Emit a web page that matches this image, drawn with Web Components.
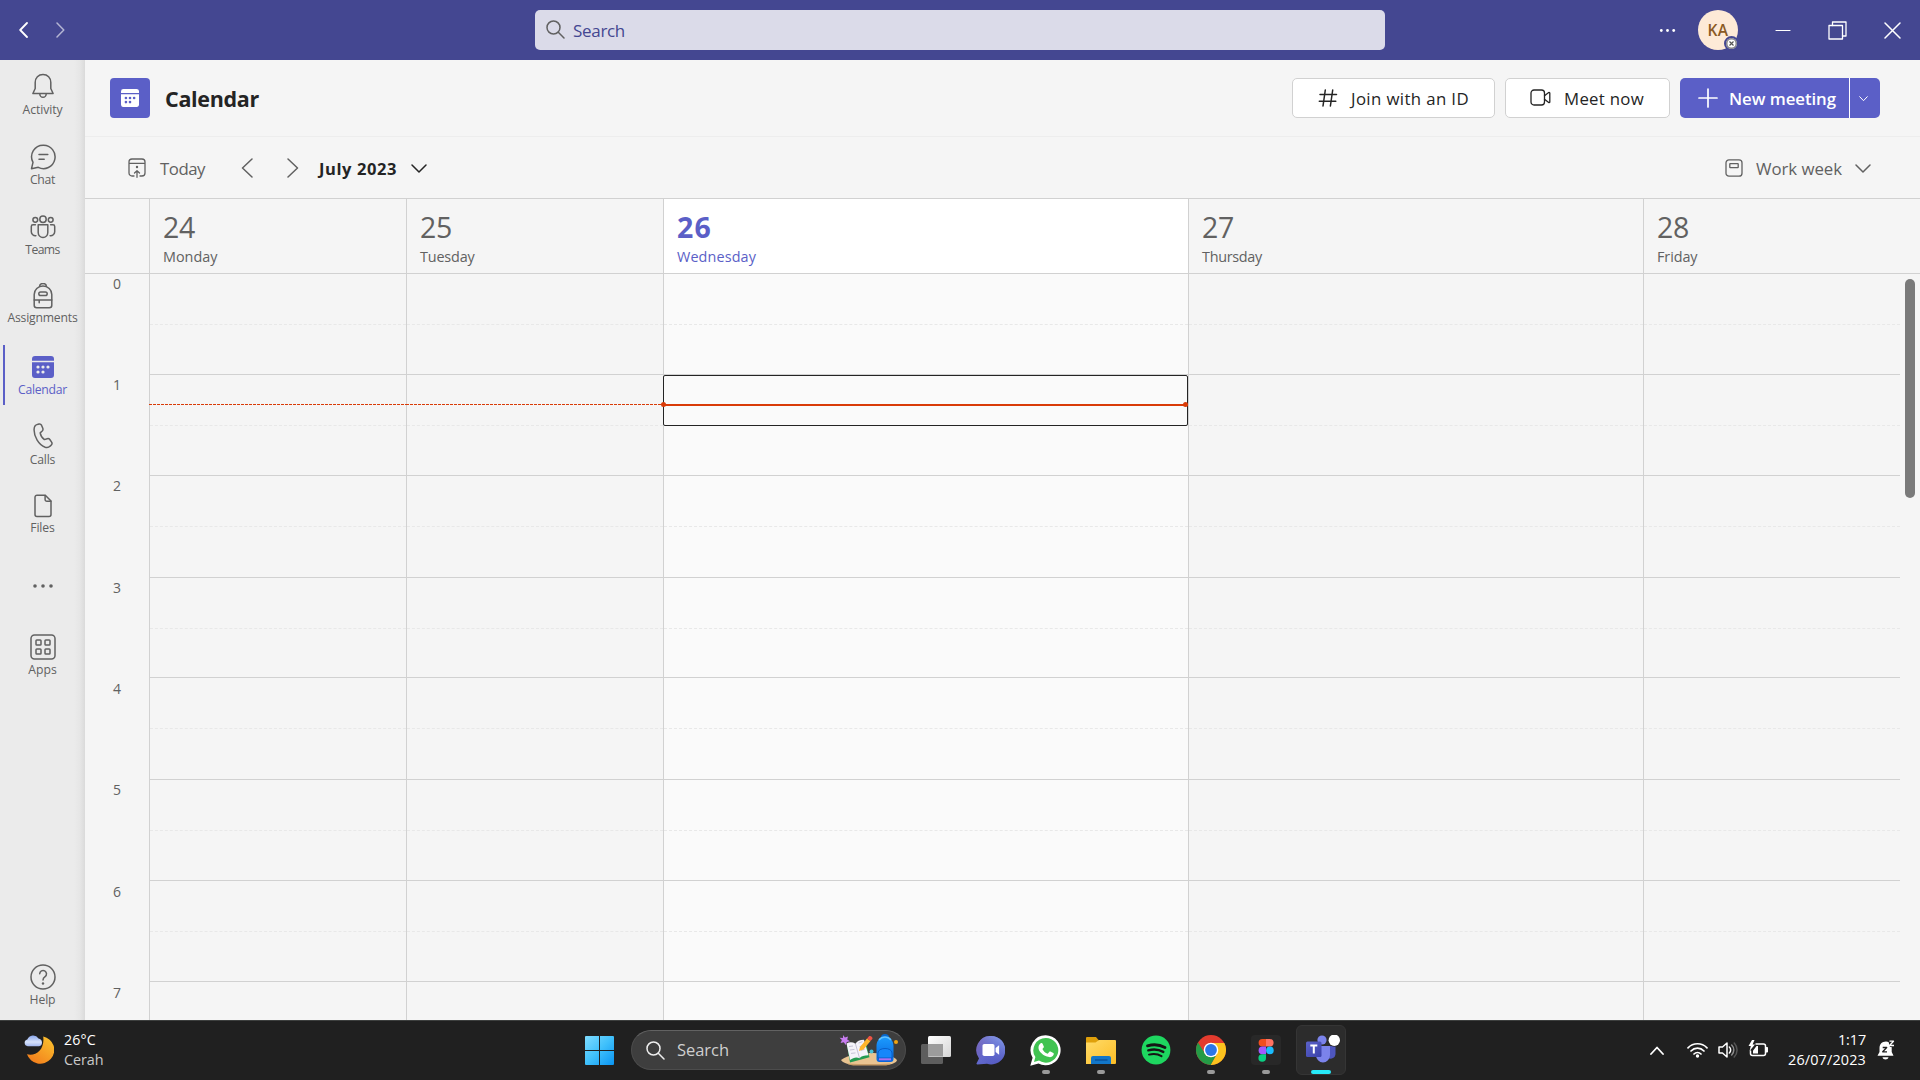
<!DOCTYPE html>
<html lang="en">
<head>
<meta charset="utf-8">
<title>Calendar</title>
<style>
html,body{margin:0;height:100%;overflow:hidden}
body{font-family:"Open Sans","Noto Sans",sans-serif;background:#f5f5f5;color:#616161}
</style>
</head>
<body>
<app-window></app-window>
<script>
const base = '<style>*{box-sizing:border-box}:host{display:flex;box-sizing:border-box}</style>';
const define = (name, html, setup) => {
  const tpl = document.createElement('template');
  tpl.innerHTML = base + html;
  customElements.define(name, class extends HTMLElement {
    connectedCallback() {
      if (this.shadowRoot) return;
      this.attachShadow({mode: 'open'}).appendChild(tpl.content.cloneNode(true));
      if (setup) setup(this, this.shadowRoot);
    }
  });
};

const L = 'fill="none" stroke="currentColor" stroke-linecap="round" stroke-linejoin="round"';
const icons = {
  back: [9,16,`<path ${L} stroke-width="1.8" d="M8 1 1.2 8 8 15"/>`],
  fwd: [9,16,`<path ${L} d="M1 1l6.8 7L1 15"/>`],
  left: [12,20,`<path ${L} d="M11 1 1.5 10 11 19"/>`],
  right: [12,20,`<path ${L} d="M1 1l9.500 9L1 19"/>`],
  down: [16,9,`<path ${L} d="M1 1l7 7 7-7"/>`],
  downs: [9,6,`<path ${L} stroke-width="1" d="M.7.7 4.500 4.700 8.300.7"/>`],
  lens: [19,19,`<g ${L}><circle cx="7.500" cy="7.500" r="6.500"/><path d="M12.300 12.300 18 18"/></g>`],
  dots: [17,5,'<g fill="currentColor"><circle cx="2.300" cy="2.500" r="1.400"/><circle cx="8.500" cy="2.500" r="1.400"/><circle cx="14.700" cy="2.500" r="1.400"/></g>'],
  min: [16,3,`<path ${L} stroke-width="1.200" d="M1 1.500h14"/>`],
  restore: [19,19,`<g ${L} stroke-width="1.300"><path d="M1 4.500h13.500V18H1z"/><path d="M4.500 4.500V1H18v14h-3.500"/></g>`],
  close: [17,17,`<path ${L} d="M1 1l15 15M16 1 1 16"/>`],
  bell: [24,26,`<g ${L}><path d="M12 1.500c-4.600 0-7.800 3.400-7.800 7.900v6.100L1.900 20.500h20.200l-2.300-5V9.400c0-4.500-3.200-7.900-7.800-7.900z"/><path d="M8.800 20.700a3.200 3.600 0 0 0 6.400 0"/></g>`],
  chat: [26,26,`<g ${L}><path d="M13.500 1.200A11.500 11.700 0 1 1 8.300 23.300L1.500 24.700 3 18.300A11.600 11.600 0 0 1 13.500 1.200z"/><path d="M9 10.600h8.800M9 15.200h5.200"/></g>`],
  teams: [26,24,`<g ${L}><circle cx="13" cy="4.300" r="3.200"/><circle cx="5.300" cy="4.800" r="2.400"/><circle cx="20.700" cy="4.800" r="2.400"/><path d="M8.200 9.800h9.600v7.700a4.800 4.900 0 0 1-9.600 0z"/><path d="M5.400 9.800H3a1.700 1.700 0 0 0-1.700 1.700v5.200a4.100 4.100 0 0 0 4.600 4M20.600 9.800H23a1.700 1.700 0 0 1 1.700 1.700v5.200a4.100 4.100 0 0 1-4.600 4"/></g>`],
  bag: [20,26,`<g ${L}><path d="M1.200 11.500a8.800 8.400 0 0 1 17.600 0v10.700a2.500 2.500 0 0 1-2.500 2.500H3.700a2.500 2.500 0 0 1-2.500-2.500z"/><path d="M6.600 3.400a3.400 2.900 0 0 1 6.800 0"/><rect x="5.800" y="9" width="8.400" height="3.600" rx="1.800"/><path d="M1.200 17h17.600M6.200 17v2.700"/></g>`],
  cal: [22,22,'<path fill="currentColor" d="M3 0h16a3 3 0 0 1 3 3v1.800H0V3a3 3 0 0 1 3-3zM0 6.300h22V19a3 3 0 0 1-3 3H3a3 3 0 0 1-3-3z"/><g fill="var(--hole,#ebebeb)"><circle cx="6" cy="11" r="1.600"/><circle cx="11" cy="11" r="1.600"/><circle cx="16" cy="11" r="1.600"/><circle cx="6" cy="16" r="1.600"/><circle cx="11" cy="16" r="1.600"/></g>'],
  call: [20,26,`<path ${L} d="M4.400 1.400 6 1c1-.2 2 .2 2.500 1.200l1.300 3.100c.4 1 .1 2-.6 2.700L7.200 9.900c.3 2.300 2 5.200 4.200 6.700l2.800-.9c1-.3 2 0 2.600.8l1.800 2.700c.6.9.5 2-.3 2.800l-1.100 1.100c-1.300 1.400-3.200 1.800-5 1.200C5.800 21.800.8 13.600 1.100 6.200 1.200 3.700 2.200 2 4.400 1.400z"/>`],
  file: [18,24,`<g ${L}><path d="M3 1.200h8.300L17 7v13.600a2 2 0 0 1-2 2H3a2 2 0 0 1-2-2V3.200a2 2 0 0 1 2-2z"/><path d="M11.100 1.500v4a1.800 1.800 0 0 0 1.800 1.800h4"/></g>`],
  more: [20,4,'<g fill="currentColor"><circle cx="2" cy="2" r="1.800"/><circle cx="10" cy="2" r="1.800"/><circle cx="18" cy="2" r="1.800"/></g>'],
  apps: [26,26,`<g ${L}><rect x="1" y="1" width="24" height="24" rx="3.500"/><rect x="6" y="6" width="5" height="5" rx=".8"/><rect x="15" y="6" width="5" height="5" rx=".8"/><rect x="6" y="15" width="5" height="5" rx=".8"/><rect x="15" y="15" width="5" height="5" rx=".8"/></g>`],
  help: [26,26,`<g ${L}><circle cx="13" cy="13" r="12"/><path d="M9.700 9.700a3.400 3.400 0 1 1 5.400 2.900c-1.400 1-2.100 1.700-2.100 3.400"/></g><circle cx="13" cy="19.500" r="1.200" fill="currentColor"/>`],
  today: [18,20,`<g ${L} stroke-width="1.300"><path d="M6 18H4a3 3 0 0 1-3-3V4a3 3 0 0 1 3-3h10a3 3 0 0 1 3 3v11a3 3 0 0 1-3 3h-2M1 5.400h16M9 19.300v-6M6.500 15 9 12.700l2.500 2.300"/></g><circle cx="9" cy="9" r="1.200" fill="currentColor"/>`],
  week: [18,18,`<g ${L} stroke-width="1.300"><rect x="1" y=".8" width="16" height="16.400" rx="3"/><rect x="4.800" y="4.600" width="8.400" height="4" rx=".4"/></g>`],
  hash: [20,18,`<path ${L} d="M7.300 1 5 17M14.700 1l-2.300 16M2 5.600h16.500M1.300 12.300h16.500"/>`],
  cam: [21,17,`<g ${L} stroke-width="1.300"><rect x="1" y="1" width="13.500" height="15" rx="3"/><path d="m14.500 6.700 4.200-3.200a.7.700 0 0 1 1.100.6v8.800a.7.700 0 0 1-1.100.6l-4.200-3.200"/></g>`],
  plus: [20,20,`<path ${L} stroke-width="1.700" d="M10 1v18M1 10h18"/>`],
  moon: [30,30,'<defs><linearGradient id="a" x1="1" x2=".3" y2="1"><stop offset="0" stop-color="#fbc62f"/><stop offset="1" stop-color="#f3801c"/></linearGradient><linearGradient id="b" x2="0" y2="1"><stop stop-color="#8ba7ec"/><stop offset=".6" stop-color="#d6e2fb"/><stop offset="1" stop-color="#a2b7f0"/></linearGradient></defs><path fill="url(#a)" d="M19.200 2.400A14 13.800 0 1 1 3 20.300c9 2.300 18-5 16.200-17.900z"/><path fill="url(#b)" d="M3.700 12.300A3.400 3.400 0 0 1 3.300 5.600 6.300 6.300 0 0 1 14.500 4.500a4 4 0 0 1 .6 7.800z"/>'],
  start: [29,29,'<defs><linearGradient id="a" x2="1" y2="1"><stop stop-color="#7fdcff"/><stop offset=".5" stop-color="#3fc0fb"/><stop offset="1" stop-color="#0a94f2"/></linearGradient></defs><path fill="url(#a)" d="M1 0h13v14H0V1a1 1 0 0 1 1-1zM15 0h13a1 1 0 0 1 1 1v13H15zM0 15h14v14H1a1 1 0 0 1-1-1zM15 15h14v13a1 1 0 0 1-1 1H15z"/>'],
  art: [60,32,'<defs><linearGradient id="a" x2="0" y2="1"><stop stop-color="#1c9cff"/><stop offset="1" stop-color="#0865dc"/></linearGradient></defs><path fill="#e9c491" d="M2 26C10 20 22 19 34 19s20 3 24 7c0 2-5 5-12 5H16C9 31 3 28 2 26z"/><path fill="#c99e68" d="M8 29.500c14 .8 30 .8 44 0-2 1.500-4 2-7 2H17c-4 0-7-.6-9-2z"/><path fill="#249b51" d="m8 12 3 16.500 19.500-5.200L27 9z"/><path fill="#f4f3fa" d="M7.500 9.500c3-1.700 6-1.500 9 .2 1.500-2.700 4-3.700 8.500-4l4.500 15.600c-4.500 0-7 .8-9 3-3-1.500-6-.8-9.500 1.700z"/><path stroke="#b9b5cd" stroke-width=".8" fill="none" d="m16.500 10 4 14M10 12.500l4-.5m-3 4 4.500-.6m-3.500 4 4.500-.5m3-9.900 4-1.300m-3 5 4-1.200m-2.600 5 3.700-1.200"/><path fill="#ffb52c" d="m21 13 7-8.500 3.500 2.500-7 8.500-4.500 1.500z"/><path fill="#ed5446" d="m28 4.500 1.800-2c1-1.300 4.700 1 3.500 2.600L31.500 7z"/><path fill="#0868ce" d="M42 3c0-4 8-4 8 0v3h-8z"/><path fill="url(#a)" d="M37.500 12c0-12.500 17-12.500 17 0v13a3 3 0 0 1-3 3h-11a3 3 0 0 1-3-3z"/><path d="M40 6c3-4 9-4 12 0" stroke="#63c3ff" stroke-width="1.400" fill="none"/><path fill="#1787fa" stroke="#0754bb" stroke-width=".8" d="M39 19c0-6 14-6 14 0v5H39z"/><path d="M40 25.300h12" stroke="#ac70f1" stroke-width="2"/><path fill="#c77cf0" d="M4.200 1l1.700 2.600L9 2.500 8.200 5.600 11 7.300 7.800 8 6.800 11 4.800 8.300 1.600 9 2.900 6 .6 3.800 3.900 4z"/><circle cx="32.500" cy="17.500" r="2" fill="#48c1d8"/><circle cx="57" cy="8" r="2" fill="#efa510"/>'],
  view: [30,28,'<defs><linearGradient id="a" x2="1" y2="1"><stop stop-color="#fff"/><stop offset="1" stop-color="#d5d5d5"/></linearGradient></defs><rect y="8" width="22" height="20" rx="1.500" fill="#5e5e5e"/><rect x="7" width="23" height="21" rx="1.500" fill="url(#a)"/><path d="M7 8h15v12.500H7z" fill="#9c9c9c"/>'],
  tchat: [29,29,'<defs><linearGradient id="a" x1="0" x2="1" y2="1"><stop stop-color="#8a62a9"/><stop offset=".5" stop-color="#6168cc"/><stop offset="1" stop-color="#5055bd"/></linearGradient><linearGradient id="b" x1=".4" y1="1" x2="1" y2="0"><stop stop-color="#5055c5" stop-opacity="0"/><stop offset="1" stop-color="#8ba5ed"/></linearGradient></defs><path fill="url(#a)" d="M15 0a14.200 14.200 0 1 1-4 27.800L1.300 28.500a.8.800 0 0 1-.7-1.200L3 22.500A14.200 14.200 0 0 1 15 0z"/><path fill="url(#b)" d="M15 0a14.200 14.200 0 1 1-4 27.800L1.300 28.500 3 22.500A14.200 14.200 0 0 1 15 0z"/><rect x="6.500" y="8" width="12" height="12" rx="1.800" fill="#fff"/><path fill="#fff" d="m19.600 12 3.500-2.800v9.600L19.600 16z"/>'],
  whats: [31,31,'<path fill="#fff" d="M15.600.2A15 15 0 1 1 8.500 28.400L.3 30.700l2.300-8A15 15 0 0 1 15.600.2z"/><path fill="#40c351" d="M15.700 2.900A12.400 12.400 0 1 1 9 25.600l-5 1.300 1.400-4.800A12.400 12.400 0 0 1 15.700 2.900z"/><path fill="#fff" d="M10.700 8.300c.7-.6 1.500-.5 1.900.4l1.200 2.800c.2.500 0 1-1.400 2.500 1 2.300 2.900 4 5.300 4.800l1.500-1.900c.4-.4.800-.5 1.300-.3l2.800 1.400c.6.300.5.900.3 1.700-.7 1.800-2.500 2.600-4.400 2.400-6-.8-11-6-10.700-9.600.1-2 1-3.300 2.200-4.200z"/>'],
  folder: [30,27,'<defs><linearGradient id="a" x2="1" y2="1"><stop stop-color="#ffdb69"/><stop offset="1" stop-color="#fcbd25"/></linearGradient></defs><path fill="#dfa00b" d="M1 0h9l3 3.500V10H0V1a1 1 0 0 1 1-1z"/><path fill="url(#a)" d="M0 5.500h9.500L13 3h16a1 1 0 0 1 1 1v22a1 1 0 0 1-1 1H0z"/><path fill="#1276c8" d="M5 27v-6a2 2 0 0 1 2-2h16a2 2 0 0 1 2 2v6z"/><path stroke="#084b91" stroke-width="1.200" d="M9 23h12.500"/>'],
  spot: [30,30,'<circle cx="15" cy="15" r="14.400" fill="#1ed760"/><g fill="none" stroke="#151515" stroke-linecap="round"><path stroke-width="2.800" d="M6.500 10.800c6-1.700 12.300-1.200 17.500 1.700"/><path stroke-width="2.400" d="M7.300 15.300c5.300-1.500 10.500-1 15 1.600"/><path stroke-width="2" d="M8 19.600c4.500-1.200 8.800-.8 12.500 1.500"/></g>'],
  chrome: [30,30,'<circle cx="15" cy="15" r="15" fill="#e33b2e"/><path fill="#fcc31e" d="M15 8h13.300A15 15 0 0 1 14.600 30l6.500-11.500z"/><path fill="#249b46" d="M2 7.500 9 18.500c2.500 4.200 8 4.500 11.500 1L14.600 30A15 15 0 0 1 2 7.500z"/><circle cx="15" cy="15" r="7.300" fill="#fff"/><circle cx="15" cy="15" r="5.900" fill="#2b76e8"/>'],
  figma: [30,30,'<rect width="30" height="30" rx="4" fill="#282828"/><path fill="#f24e1e" d="M15 4v7.600h-3.600a3.800 3.800 0 0 1 0-7.600z"/><path fill="#ff7262" d="M15 4h3.800a3.800 3.800 0 0 1 0 7.600H15z"/><path fill="#a259ff" d="M15 11.600v7.600h-3.600a3.800 3.800 0 0 1 0-7.600z"/><circle cx="18.900" cy="15.400" r="3.800" fill="#1abcfe"/><path fill="#0acf83" d="M15 19.200V23a3.800 3.800 0 1 1-3.800-3.800z"/>'],
  mst: [36,28,'<defs><linearGradient id="a" x2="1" y2="1"><stop stop-color="#5b62c9"/><stop offset="1" stop-color="#3940a9"/></linearGradient></defs><path fill="#4e56be" d="M22 11h7.500v8a5 5 0 0 1-7.500 4z"/><circle cx="16" cy="5" r="4.600" fill="#7b83eb"/><path fill="#7b83eb" d="M10 11h14v9a7 7.500 0 0 1-14 0z"/><rect y="6.500" width="15.500" height="15.500" rx="1.500" fill="url(#a)"/><path stroke="#fff" stroke-width="2" d="M4.300 10.500h7M7.800 10v8.500" fill="none"/><circle cx="28.300" cy="5.200" r="6.500" fill="#292929"/><circle cx="28.300" cy="5.200" r="5.700" fill="#fff"/>'],
  up: [14,9,`<path ${L} stroke-width="1.800" d="M1 8 7 1.500 13 8"/>`],
  wifi: [21,16,`<g ${L} stroke-width="1.700"><path d="M1 5.800a13.200 13.200 0 0 1 19 0M4 9a9 9 0 0 1 13 0M7 12a5 5 0 0 1 7 0"/></g><circle cx="10.500" cy="14" r="1.700" fill="currentColor"/>`],
  vol: [21,18,`<g ${L} stroke-width="1.500"><path d="M1 6h3.500L9 2v14l-4.500-4H1zM11.300 6a4 4 0 0 1 0 6"/><path stroke="#8b8b8b" d="M13.700 4a7 7 0 0 1 0 10"/><path stroke="#555" d="M16.200 2a10 10 0 0 1 0 14"/></g>`],
  bat: [21,18,`<g ${L} stroke-width="1.500"><path d="M8 4h7.500a2 2 0 0 1 2 2v7.500a2 2 0 0 1-2 2h-11a2 2 0 0 1-2-2V11"/></g><path fill="currentColor" d="M18 7h1.200a.8.800 0 0 1 .8.800v4a.8.800 0 0 1-.8.800H18zM4 0 .5 6h2.300L1.500 11 7 4.500H4.600L6.500 0zM5 13.500V10.800L8.500 6H10v7.500z"/>`],
  zbell: [18,20,'<path fill="currentColor" d="M9 1.500c-4 0-6.500 2.800-6.500 6.500v4L.5 15.700h16L14.700 12V8c0-3.700-1.700-6.500-5.700-6.500zM5.500 17.200h6c-.5 3-5.500 3-6 0z"/><path d="M11 0h7v7h-5z" fill="#202020"/><g fill="none" stroke-linejoin="round"><path stroke="#202020" stroke-width="1.300" d="M5.700 7.500h4l-4 4.300h4.300"/><path stroke="currentColor" stroke-width="1.300" d="M12.500 1.200h4l-4 4.300H17"/></g>']
};

define('ui-icon', '<style>:host{flex:none;line-height:0}</style>', (el, root) => {
  const [w, h, body] = icons[el.getAttribute('name')];
  const k = +(el.getAttribute('scale') || 1);
  root.innerHTML += `<svg width="${w*k}" height="${h*k}" viewBox="0 0 ${w} ${h}" stroke-width="1.5">${body}</svg>`;
});

/* Single-line label tracked to an exact advance width. */
define('ui-text', '<style>:host{display:block;flex:none;white-space:nowrap;line-height:20px}</style><slot></slot>', el => {
  const w = +el.getAttribute('w');
  el.style.fontSize = el.getAttribute('fs') + 'px';
  const r = document.createRange();
  r.selectNodeContents(el);
  const n = el.textContent.length;
  const ls = (w - r.getBoundingClientRect().width) / n;
  el.style.letterSpacing = ls.toFixed(3) + 'px';
  el.style.width = w + 'px';
});

define('title-bar', `
<style>
:host{height:60px;background:#444791;color:#fff;align-items:center}
.nav{display:flex;gap:28px;padding-left:19px;width:535px}
.nav ui-icon+ui-icon{opacity:.6}
.search{width:850px;height:40px;border-radius:5px;background:#dbdbe9;display:flex;align-items:center;padding-left:11px;gap:8px;color:#444791}
.search ui-icon{color:#616161;margin-top:-1px}
.search ui-text{padding-top:1px}
.dots{margin-left:274px}
.av{width:40px;height:40px;border-radius:50%;background:#fdead7;color:#8a5a24;margin-left:22px;display:flex;align-items:center;justify-content:center;position:relative;font-weight:600}
.av i{position:absolute;right:-1px;bottom:-1px;width:15px;height:15px;border-radius:50%;background:#fff;border:2px solid #444791;box-shadow:inset 0 0 0 1.5px #8a8a8a;display:flex;align-items:center;justify-content:center}
.av svg{display:block}
.min{margin-left:37px}.res{margin-left:37px}.cl{margin-left:37px}
</style>
<div class="nav"><ui-icon name="back"></ui-icon><ui-icon name="fwd"></ui-icon></div>
<div class="search"><ui-icon name="lens"></ui-icon><ui-text w="52" fs="17">Search</ui-text></div>
<ui-icon class="dots" name="dots"></ui-icon>
<div class="av"><ui-text w="21" fs="15.500">KA</ui-text><i><svg width="5" height="5"><path d="M.5.5l4 4m0-4-4 4" stroke="#555" stroke-width="1.200"/></svg></i></div>
<ui-icon class="min" name="min"></ui-icon><ui-icon class="res" name="restore"></ui-icon><ui-icon class="cl" name="close"></ui-icon>`);

define('rail-item', `
<style>
:host{flex-direction:column;align-items:center;flex:none;width:85px;position:relative}
.i{height:50px;padding-top:1px;display:flex;align-items:center;justify-content:center}
:host([active]){color:#5b5fc7}
:host([active])::before{content:"";position:absolute;left:3px;top:4px;width:2px;height:60px;background:#5b5fc7}
</style><div class="i"></div>`, (el, root) => {
  const a = k => el.getAttribute(k);
  el.style.height = a('h') + 'px';
  root.querySelector('.i').innerHTML = `<ui-icon name="${a('icon')}"></ui-icon>`;
  if (a('label')) {
    const t = document.createElement('ui-text');
    t.textContent = a('label');
    t.setAttribute('w', a('w')); t.setAttribute('fs', '12.2');
    t.style.marginTop = (+a('off') - 35) + 'px';
    root.appendChild(t);
  }
});

define('app-rail', `
<style>:host{width:85px;flex-direction:column;background:linear-gradient(90deg,#ebebeb 74px,#e6e6e6 80px,#dadada 85px)}</style>
<rail-item icon="bell" label="Activity" w="40" h="71" off="25"></rail-item>
<rail-item icon="chat" label="Chat" w="25" h="70" off="24"></rail-item>
<rail-item icon="teams" label="Teams" w="34.500" h="69" off="24"></rail-item>
<rail-item icon="bag" label="Assignments" w="70" h="71" off="23"></rail-item>
<rail-item active icon="cal" label="Calendar" w="49" h="69" off="24"></rail-item>
<rail-item icon="call" label="Calls" w="25.500" h="70" off="25"></rail-item>
<rail-item icon="file" label="Files" w="24.500" h="80" off="23"></rail-item>
<rail-item icon="more" h="61"></rail-item>
<rail-item icon="apps" label="Apps" w="28.500" h="330" off="24"></rail-item>
<rail-item icon="help" label="Help" w="26" h="69" off="24"></rail-item>`);

define('page-header', `
<style>
:host{height:77px;align-items:flex-start;padding:18px 40px 0 25px;border-bottom:1px solid #ededed}
.logo{width:40px;height:40px;border-radius:4px;background:#5b5fc7;color:#fff;--hole:#5b5fc7;display:flex;align-items:center;justify-content:center}
.t{margin:11px 0 0 15px;font-weight:700;color:#242424}
.b{height:40px;border:1px solid #d1d1d1;border-radius:5px;background:#fff;color:#242424;display:flex;align-items:center}
.b ui-text,.n ui-text{padding-top:2px}
.b ui-icon,.n>ui-icon{margin-top:-1px}
.n{height:40px;border-radius:5px;background:#5b5fc7;color:#fff;display:flex;align-items:center;font-weight:600;width:200px;margin-left:10px;padding-left:18px}
.d{margin-left:13px;width:31px;height:40px;border-left:1px solid #fff;display:flex;align-items:center;padding:2px 0 0 9px}
</style>
<div class="logo"><ui-icon name="cal" scale=".82"></ui-icon></div><ui-text class="t" w="94" fs="21.500">Calendar</ui-text>
<div class="b" style="width:203px;margin-left:auto;padding-left:25px;gap:13px"><ui-icon name="hash"></ui-icon><ui-text w="118" fs="16.800">Join with an ID</ui-text></div>
<div class="b" style="width:165px;margin-left:10px;padding-left:24px;gap:13px"><ui-icon name="cam"></ui-icon><ui-text w="80" fs="16.800">Meet now</ui-text></div>
<div class="n"><ui-icon name="plus"></ui-icon><ui-text style="margin-left:11px" w="107" fs="16.800">New meeting</ui-text><div class="d"><ui-icon name="downs"></ui-icon></div></div>`);

define('cal-toolbar', `
<style>:host{height:61px;align-items:center;padding:1px 49px 0 43px}.m{color:#242424;font-weight:700}ui-text{padding-top:2px}</style>
<ui-icon name="today"></ui-icon><ui-text style="margin-left:14px" w="45" fs="16.800">Today</ui-text>
<ui-icon style="margin-left:36px" name="left"></ui-icon><ui-icon style="margin-left:34px" name="right"></ui-icon>
<ui-text class="m" style="margin-left:20px" w="78" fs="16.500">July 2023</ui-text><ui-icon style="margin-left:14px;color:#242424" name="down"></ui-icon>
<ui-icon style="margin-left:auto" name="week"></ui-icon><ui-text style="margin-left:13px" w="86" fs="16.800">Work week</ui-text><ui-icon style="margin-left:13px" name="down"></ui-icon>`);

define('day-head', `
<style>
:host{flex-direction:column;flex:none;border-left:1px solid #d1d1d1;height:74px;padding:16px 0 0 13px}
:host([today]){background:#fff;color:#5b5fc7}
.n{line-height:24px}:host([today]) .n{font-weight:700}
.d{margin-top:8px}
</style><slot></slot>`, (el, root) => {
  const a = k => el.getAttribute(k);
  el.style.width = a('width') + 'px';
  root.innerHTML += `<ui-text class="n" w="${a('nw')}" fs="28.5">${a('n')}</ui-text><ui-text class="d" w="${a('dw')}" fs="14.4">${a('day')}</ui-text>`;
});

define('week-head', `
<style>:host{height:76px;border-top:1px solid #d1d1d1;border-bottom:1px solid #d1d1d1;padding-left:64px}</style>
<day-head width="257" n="24" nw="32" day="Monday" dw="54.500"></day-head>
<day-head width="257" n="25" nw="32" day="Tuesday" dw="54.500"></day-head>
<day-head width="525" n="26" nw="35" day="Wednesday" dw="79" today></day-head>
<day-head width="455" n="27" nw="32" day="Thursday" dw="60"></day-head>
<day-head width="277" n="28" nw="32" day="Friday" dw="40.500"></day-head>`);

define('hour-cell', `
<style>:host{display:block;height:var(--h);border-top:1px solid #d1d1d1;overflow:hidden}
div{height:var(--half);border-bottom:1px dashed #e8e8e8}</style><div></div>`);

define('day-column', `
<style>
:host{flex-direction:column;flex:none;border-left:1px solid #d1d1d1;position:relative}
:host([today]){background:#fafafa}
hour-cell:first-of-type{border-top-color:transparent}
.past{position:absolute;left:-1px;right:0;top:130px;height:1px;background:repeating-linear-gradient(90deg,#d93b08 0 3px,transparent 3px 4px)}
.slot{position:absolute;left:-1px;right:0;top:101px;height:51px;border:1px solid #242424;border-radius:2px}
.now{position:absolute;left:0;right:0;top:130px;height:2px;background:#d93b08}
.now::before,.now::after{content:"";position:absolute;top:-2px;width:5px;height:5px;border-radius:50%;background:#d93b08}
.now::before{left:-3px}.now::after{right:0}
</style>`, (el, root) => {
  el.style.width = el.getAttribute('width') + 'px';
  const hs = [100,101,102,101,102,101,101,39];
  root.innerHTML += hs.map((h,i) => `<hour-cell style="--h:${h}px;--half:${i ? 51 : 50}px"></hour-cell>`).join('')
    + (el.hasAttribute('today') ? '<div class="slot"></div><div class="now"></div>' : '')
    + (el.hasAttribute('past') ? '<div class="past"></div>' : '');
});

define('week-grid', `
<style>
:host{flex:1;min-height:0;overflow:hidden}
.h{width:64px;display:flex;flex-direction:column}
.h div{flex:none;display:flex;justify-content:center}
.s{flex:1;padding:5px 0 0 5px}
.s div{width:10px;height:219px;border-radius:5px;background:#7a7a7a}
</style>
<div class="h"></div>
<day-column width="257" past></day-column><day-column width="257" past></day-column><day-column width="525" today></day-column><day-column width="455"></day-column><day-column width="257"></day-column>
<div class="s"><div></div></div>`, (el, root) => {
  root.querySelector('.h').innerHTML = [101,101,102,101,101,102,101,38].map((h,i) => `<div style="height:${h}px"><ui-text w="8" fs="14">${i}</ui-text></div>`).join('');
});

define('task-tile', `
<style>
:host{width:50px;height:50px;flex:none;align-items:center;justify-content:center;position:relative;border-radius:6px;border:1px solid transparent}
:host([current]){background:#2c2c2c;border-color:#353535}
:host([open])::after,:host([current])::after{content:"";position:absolute;left:20px;bottom:0;width:8px;height:4px;border-radius:2px;background:#9a9a9a}
:host([current])::after{left:14px;width:20px;background:#27e9f8}
</style><slot></slot>`);

define('task-bar', `
<style>
:host{height:60px;background:#202020;border-top:1px solid #3d3f3e;color:#fff;align-items:center;padding-bottom:1px}
.w{display:flex;align-items:center;padding-left:24px;gap:10px;width:585px}
.w ui-icon{margin-top:-3px}
.w div{margin-top:-1px}
.dim{color:#c9c9c9}
.s{width:275px;height:40px;border-radius:20px;background:#3e3e3e;border:1px solid #4c4c4c;border-top-color:#626262;margin-left:17px;display:flex;align-items:center;padding:0 6px 0 14px;color:#cfcfcf}
.s .l{color:#eee}
.apps{display:flex;gap:5px;margin-left:5px}
.tray{display:flex;align-items:center;margin-left:auto}
.c{display:flex;flex-direction:column;align-items:flex-end;margin:-1px 11px 0 19px}
</style>
<div class="w"><ui-icon name="moon"></ui-icon><div><ui-text w="32" fs="14.200">26°C</ui-text><ui-text class="dim" w="39.500" fs="14.400">Cerah</ui-text></div></div>
<ui-icon name="start"></ui-icon>
<div class="s"><ui-icon class="l" name="lens"></ui-icon><ui-text style="margin-left:12px" w="52" fs="16.500">Search</ui-text><ui-icon style="margin-left:auto" name="art"></ui-icon></div>
<div class="apps">
<task-tile><ui-icon name="view"></ui-icon></task-tile><task-tile><ui-icon style="margin-right:1px" name="tchat"></ui-icon></task-tile>
<task-tile open><ui-icon style="margin-right:1px" name="whats"></ui-icon></task-tile><task-tile open><ui-icon name="folder"></ui-icon></task-tile>
<task-tile><ui-icon name="spot"></ui-icon></task-tile><task-tile open><ui-icon name="chrome"></ui-icon></task-tile>
<task-tile open><ui-icon name="figma"></ui-icon></task-tile><task-tile current><ui-icon style="margin:0 -5px 2px 0" name="mst"></ui-icon></task-tile></div>
<div class="tray"><ui-icon name="up"></ui-icon><ui-icon style="margin-left:23px" name="wifi"></ui-icon><ui-icon style="margin-left:10px" name="vol"></ui-icon><ui-icon style="margin:0 0 2px 9px" name="bat"></ui-icon>
<div class="c"><ui-text w="28" fs="14.400">1:17</ui-text><ui-text w="78" fs="14.400">26/07/2023</ui-text></div><ui-icon name="zbell" style="margin-right:25px"></ui-icon></div>`);

define('app-window', `
<style>
:host{width:1920px;height:1080px;flex-direction:column;overflow:hidden}
.body{display:flex;flex:1;min-height:0}
main{flex:1;display:flex;flex-direction:column;min-width:0}
</style>
<title-bar></title-bar>
<div class="body"><app-rail></app-rail><main><page-header></page-header><cal-toolbar></cal-toolbar><week-head></week-head><week-grid></week-grid></main></div>
<task-bar></task-bar>`);
</script>
</body>
</html>
